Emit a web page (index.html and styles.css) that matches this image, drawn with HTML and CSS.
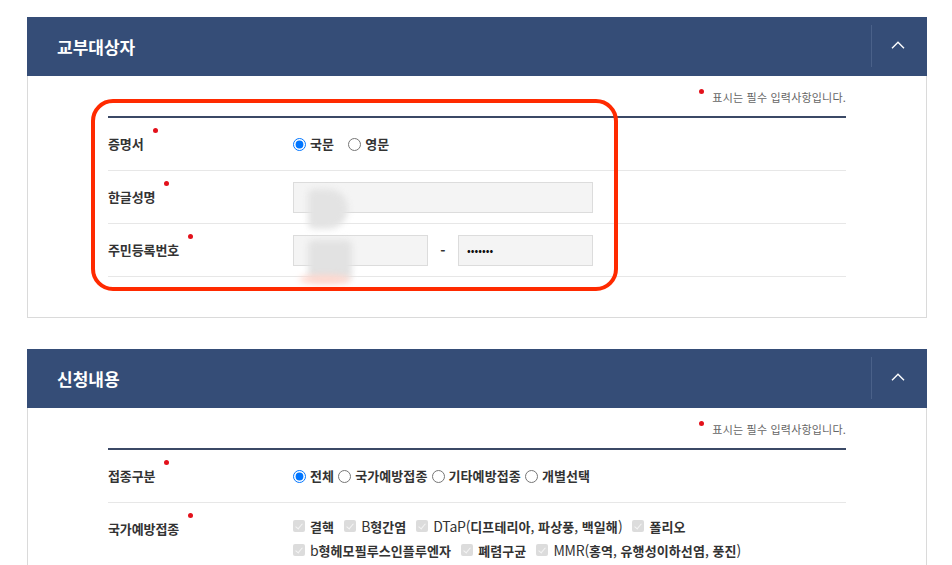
FILE: index.html
```html
<!DOCTYPE html>
<html lang="ko">
<head>
<meta charset="utf-8">
<title>교부대상자</title>
<link rel="stylesheet" href="styles.css">
</head>
<body>
<div class="page">
  <section class="panel panel-first">
    <header class="panel-head">
      <h2 class="panel-title">교부대상자</h2>
      <button class="toggle" type="button" aria-label="접기">
        <svg width="14" height="8" viewBox="0 0 14 8"><path d="M1 7.2 L7 1.2 L13 7.2" fill="none" stroke="#fff" stroke-width="1.4"/></svg>
      </button>
    </header>
    <div class="panel-body">
      <p class="note"><span class="note-dot"></span>표시는 필수 입력사항입니다.</p>
      <div class="form">
        <div class="row">
          <div class="label"><span class="req">증명서</span></div>
          <div class="value">
            <label class="radio gap-wide"><input type="radio" name="cert" checked><span>국문</span></label>
            <label class="radio gap-wide"><input type="radio" name="cert"><span>영문</span></label>
          </div>
        </div>
        <div class="row">
          <div class="label"><span class="req">한글성명</span></div>
          <div class="value masked">
            <input class="field field-long" type="text">
            <span class="blur blur-a"></span>
          </div>
        </div>
        <div class="row">
          <div class="label"><span class="req">주민등록번호</span></div>
          <div class="value masked">
            <input class="field field-short" type="text">
            <span class="dash">-</span>
            <input class="field field-short pw" type="password" value="1234567">
            <span class="blur blur-b"></span>
            <span class="blur blur-c"></span>
          </div>
        </div>
      </div>
    </div>
    <div class="annot"></div>
  </section>

  <section class="panel">
    <header class="panel-head">
      <h2 class="panel-title">신청내용</h2>
      <button class="toggle" type="button" aria-label="접기">
        <svg width="14" height="8" viewBox="0 0 14 8"><path d="M1 7.2 L7 1.2 L13 7.2" fill="none" stroke="#fff" stroke-width="1.4"/></svg>
      </button>
    </header>
    <div class="panel-body">
      <p class="note"><span class="note-dot"></span>표시는 필수 입력사항입니다.</p>
      <div class="form">
        <div class="row">
          <div class="label"><span class="req">접종구분</span></div>
          <div class="value">
            <label class="radio gap-tight"><input type="radio" name="kind" checked><span>전체</span></label>
            <label class="radio gap-tight"><input type="radio" name="kind"><span>국가예방접종</span></label>
            <label class="radio gap-tight"><input type="radio" name="kind"><span>기타예방접종</span></label>
            <label class="radio gap-tight"><input type="radio" name="kind"><span>개별선택</span></label>
          </div>
        </div>
        <div class="row row-top">
          <div class="label label-top"><span class="req">국가예방접종</span></div>
          <div class="value checks">
            <div class="check-line">
              <span class="check"><span class="box"></span><span>결핵</span></span>
              <span class="check"><span class="box"></span><span><span class="lat">B</span>형간염</span></span>
              <span class="check"><span class="box"></span><span><span class="lat">DTaP(</span>디프테리아<span class="lat">,</span> 파상풍<span class="lat">,</span> 백일해<span class="lat">)</span></span></span>
              <span class="check"><span class="box"></span><span>폴리오</span></span>
            </div>
            <div class="check-line">
              <span class="check"><span class="box"></span><span><span class="lat">b</span>형헤모필루스인플루엔자</span></span>
              <span class="check"><span class="box"></span><span>폐렴구균</span></span>
              <span class="check"><span class="box"></span><span><span class="lat">MMR(</span>홍역<span class="lat">,</span> 유행성이하선염<span class="lat">,</span> 풍진<span class="lat">)</span></span></span>
            </div>
          </div>
        </div>
      </div>
    </div>
  </section>
</div>
</body>
</html>
```

FILE: styles.css
```css
* { box-sizing: border-box; }

html, body {
  margin: 0;
  padding: 0;
  background: #fff;
}

body {
  font-family: "Noto Sans CJK KR", "Noto Sans", sans-serif;
  color: #333;
}

.page {
  padding: 17px 25px 0 27px;
}

.panel {
  position: relative;
  width: 900px;
  margin-bottom: 31px;
}

.panel-head {
  height: 59px;
  background: #354d77;
  display: flex;
  align-items: center;
  justify-content: space-between;
}

.panel-title {
  margin: 0;
  padding-left: 30px;
  font-size: 17px;
  font-weight: 700;
  letter-spacing: 0;
  color: #fff;
  line-height: 24px;
}

.toggle {
  width: 56px;
  height: 42px;
  margin-top: -1px;
  border: 0;
  border-left: 1px solid #4a6189;
  background: transparent;
  padding: 0 4px 2px 0;
  display: flex;
  align-items: center;
  justify-content: center;
}

.panel-body {
  border: 1px solid #dadada;
  border-top: 0;
  padding: 13px 80px 40px;
}

.note {
  margin: 0 0 11px;
  text-align: right;
  font-size: 11px;
  line-height: 16px;
  letter-spacing: 0.2px;
  color: #666;
}

.note-dot {
  display: inline-block;
  width: 5px;
  height: 5px;
  border-radius: 50%;
  background: #e3111b;
  margin-right: 8px;
  position: relative;
  top: -8px;
}

.form {
  border-top: 2px solid #3b4966;
}

.row {
  display: grid;
  grid-template-columns: 185px 1fr;
  align-items: center;
  height: 53px;
  border-bottom: 1px solid #e7e7e7;
}

.row-top {
  align-items: start;
  height: auto;
  border-bottom: 0;
  padding-top: 11px;
}

.label {
  font-size: 13px;
  font-weight: 700;
  letter-spacing: -0.1px;
  color: #333;
  line-height: 20px;
}

.label-top {
  padding-top: 5px;
}

.req {
  position: relative;
  display: inline-block;
}

.req::after {
  content: "";
  position: absolute;
  right: -14px;
  top: -6px;
  width: 5px;
  height: 5px;
  border-radius: 50%;
  background: #e3111b;
}

.value {
  display: flex;
  align-items: center;
  font-size: 13px;
  font-weight: 700;
  letter-spacing: 0.1px;
  color: #333;
}

.radio {
  display: inline-flex;
  align-items: center;
  line-height: 20px;
}

.radio input {
  width: 13px;
  height: 13px;
  margin: 0 4px 0 0;
}

.gap-wide { margin-right: 14px; }
.gap-tight { margin-right: 4px; }

.masked {
  position: relative;
}

.field {
  height: 31px;
  background: #f4f4f4;
  border: 1px solid #dcdcdc;
  border-radius: 0;
  padding: 0 8px;
  font-family: inherit;
  outline: none;
}

.field-long { width: 300px; }
.field-short { width: 135px; }

.pw {
  font-size: 11px;
  letter-spacing: 0px;
  color: #111;
  padding-left: 8px;
}

.dash {
  width: 30px;
  text-align: center;
  font-size: 14px;
  font-weight: 700;
  color: #333;
}

.blur {
  position: absolute;
  pointer-events: none;
  filter: blur(3px);
}

.blur-a {
  left: 15px;
  top: 7px;
  width: 40px;
  height: 40px;
  background: #e3e3e3;
  border-radius: 6px 20px 20px 6px;
}

.blur-b {
  left: 15px;
  top: 5px;
  width: 44px;
  height: 40px;
  background: #e2e2e2;
  border-radius: 6px;
}

.blur-c {
  left: 6px;
  top: 40px;
  width: 52px;
  height: 9px;
  background: #ffd6cc;
  border-radius: 50%;
}

.checks {
  display: block;
}

.check-line {
  display: flex;
  align-items: center;
  height: 24px;
}

.check {
  display: inline-flex;
  align-items: center;
  margin-right: 10px;
  white-space: nowrap;
}

.box {
  position: relative;
  width: 12px;
  height: 12px;
  margin-right: 5px;
  background: #dcdcdc;
  border-radius: 2px;
}

.box::after {
  content: "";
  position: absolute;
  left: 4px;
  top: 1.5px;
  width: 3px;
  height: 6px;
  border: solid #f4f4f4;
  border-width: 0 1.5px 1.5px 0;
  transform: rotate(40deg);
}

.lat {
  font-weight: 400;
  font-size: 14px;
  letter-spacing: -0.2px;
}

.annot {
  position: absolute;
  left: 64px;
  top: 82px;
  width: 527px;
  height: 192px;
  border: 4px solid #ff2a00;
  border-radius: 22px;
  pointer-events: none;
}
```
